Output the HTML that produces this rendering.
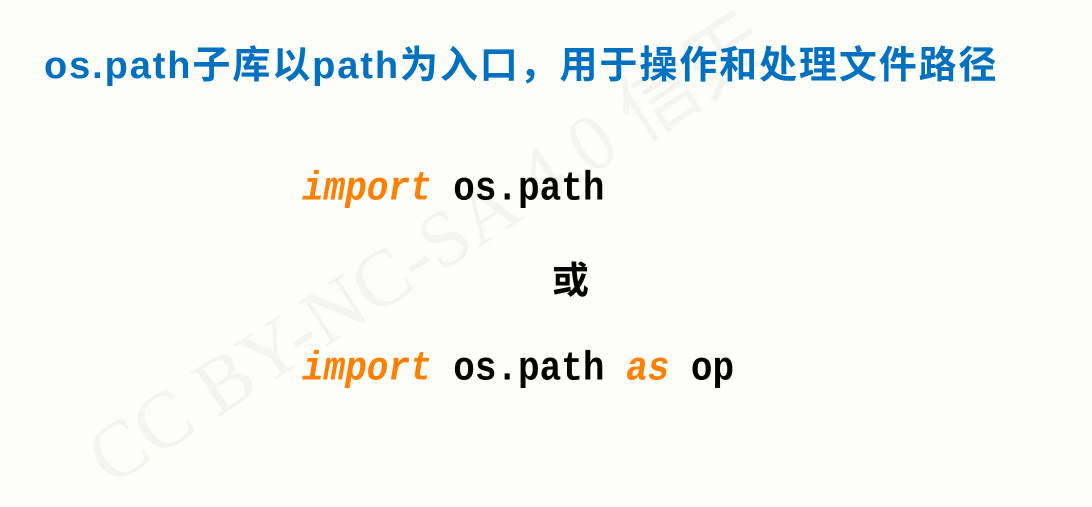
<!DOCTYPE html>
<html><head><meta charset="utf-8"><style>
html,body{margin:0;padding:0}
body{width:1092px;height:445px;background:#fdfdf9;position:relative;overflow:hidden}
.t{position:absolute;left:44px;top:34px;font:bold 38px "Liberation Sans","Noto Sans CJK SC",sans-serif;color:#0070c0;white-space:nowrap;letter-spacing:1.9px}
.c{position:absolute;left:302px;font:bold 36px "Liberation Mono","DejaVu Sans Mono",monospace;color:#000;white-space:nowrap;transform:scaleY(1.12);transform-origin:left top}
.k{color:#ff7f00;font-style:italic}
.or{position:absolute;left:552px;top:250px;font:bold 37px "Noto Sans CJK SC",sans-serif}
.wm{position:absolute;left:60px;top:410px;font:80px "Liberation Serif",serif;color:#f4f4f0;transform:rotate(-33deg);transform-origin:left top;white-space:nowrap}
</style></head><body>
<div class="wm">CC BY-NC-SA 4.0 信天</div>
<div class="t">os.path子库以path为入口，用于操作和处理文件路径</div>
<div class="c" style="top:166px"><span class="k">import</span> os.path</div>
<div class="or">或</div>
<div class="c" style="top:346px"><span class="k">import</span> os.path <span class="k">as</span> op</div>
</body></html>
